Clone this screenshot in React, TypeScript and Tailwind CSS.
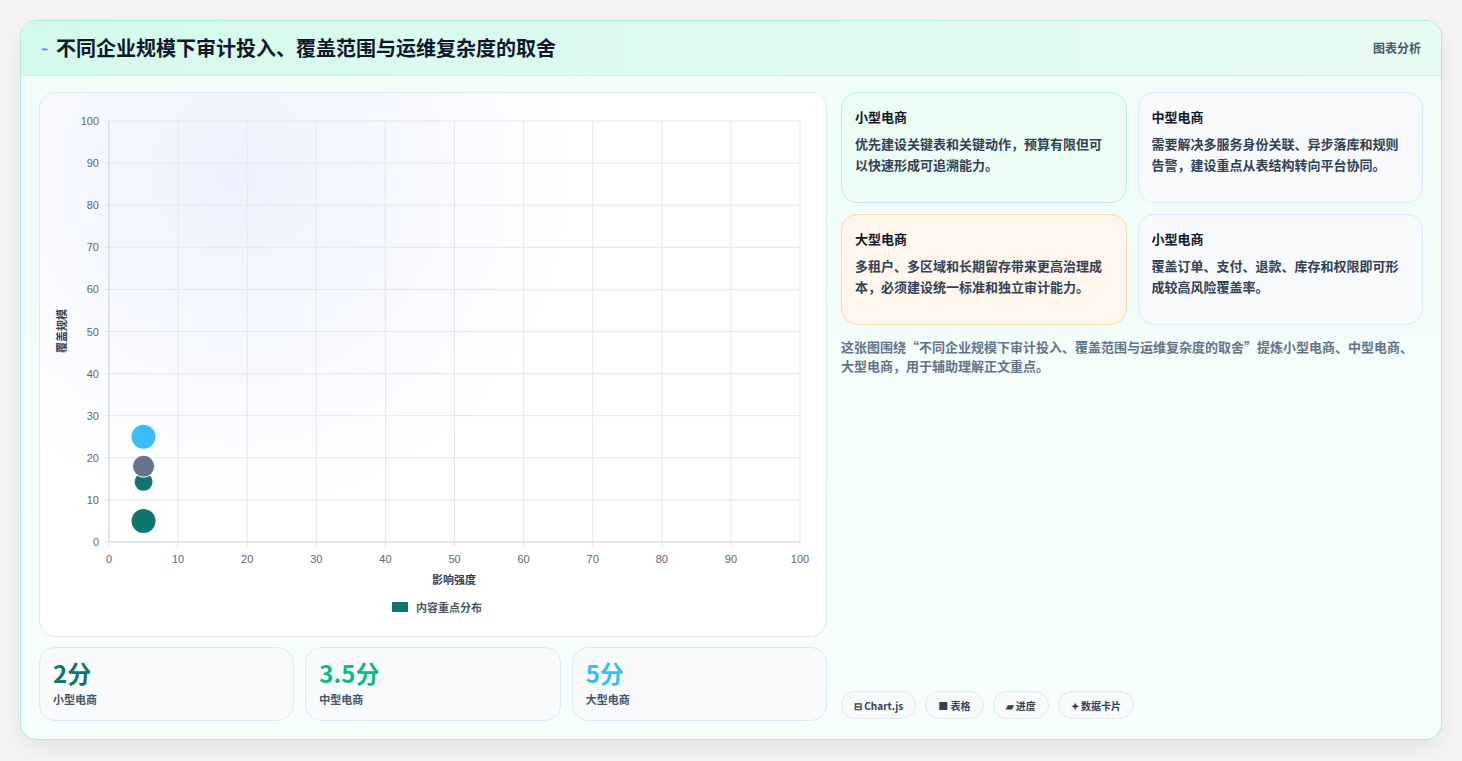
import React from "react";

const F = { fontFamily: '"Noto Sans CJK SC", "Noto Sans", sans-serif' };

function Chart() {
  const ox = 69, oy = 449, w = 691, h = 421;
  const sx = (v: number) => ox + (v / 100) * w;
  const sy = (v: number) => oy - (v / 100) * h;
  const ticks = [0, 10, 20, 30, 40, 50, 60, 70, 80, 90, 100];
  return (
    <svg width="787" height="500" viewBox="0 0 787 500" className="block">
      {ticks.map((t) => (
        <g key={t}>
          <line x1={sx(t)} x2={sx(t)} y1={sy(100)} y2={oy + 5} stroke="#e5e7eb" />
          <line x1={ox - 5} x2={sx(100)} y1={sy(t)} y2={sy(t)} stroke="#e5e7eb" />
          <text x={sx(t)} y={oy + 21} fontSize="11" fill="#666" textAnchor="middle" fontFamily="Liberation Sans, sans-serif">{t}</text>
          <text x={ox - 10} y={sy(t) + 4} fontSize="11" fill="#666" textAnchor="end" fontFamily="Liberation Sans, sans-serif">{t}</text>
        </g>
      ))}
      <line x1={ox} x2={ox} y1={sy(100)} y2={oy} stroke="#d1d5db" />
      <line x1={ox} x2={sx(100)} y1={oy} y2={oy} stroke="#d1d5db" />
      <circle cx={sx(5)} cy={sy(25)} r="12" fill="#38bdf8" />
      <circle cx={sx(5)} cy={sy(14.3)} r="9" fill="#0f766e" />
      <circle cx={sx(5)} cy={sy(18)} r="11" fill="#64748b" stroke="#fff" strokeWidth="1" />
      <circle cx={sx(5)} cy={sy(5)} r="12" fill="#0f766e" />
      <text x={414} y={491} fontSize="11" fontWeight="700" fill="#374151" textAnchor="middle" style={F}>影响强度</text>
      <text transform="translate(26 238) rotate(-90)" fontSize="11" fontWeight="700" fill="#374151" textAnchor="middle" style={F}>覆盖规模</text>
    </svg>
  );
}

const cards = [
  { t: "小型电商", d: "优先建设关键表和关键动作，预算有限但可以快速形成可追溯能力。", c: "bg-[#ecfdf5] border-[#bbf0d9]" },
  { t: "中型电商", d: "需要解决多服务身份关联、异步落库和规则告警，建设重点从表结构转向平台协同。", c: "bg-[#f8fafc] border-[#dbeafe]" },
  { t: "大型电商", d: "多租户、多区域和长期留存带来更高治理成本，必须建设统一标准和独立审计能力。", c: "bg-[#fff7ed] border-[#fcd9a8]" },
  { t: "小型电商", d: "覆盖订单、支付、退款、库存和权限即可形成较高风险覆盖率。", c: "bg-[#f8fafc] border-[#dbeafe]" },
];

export default function App() {
  return (
    <div className="w-[1462px] h-[761px] bg-[#f5f5f5] p-5 pb-0" style={F}>
      <div className="h-[720px] rounded-2xl border border-[#a7eee0] bg-gradient-to-b from-[#f0fdf8] to-[#f7fffd] shadow-[0_8px_24px_rgba(0,0,0,0.08)] overflow-hidden flex flex-col">
        <div className="h-[55px] shrink-0 flex items-center justify-between px-5 bg-gradient-to-r from-[#d4faec] to-[#e8fcf3] border-b border-[#c9f3e6]">
          <div className="flex items-center gap-2">
            <span className="text-[#3b82f6] text-[12px]">⌁</span>
            <span className="text-[20px] font-bold text-[#0f172a]">不同企业规模下审计投入、覆盖范围与运维复杂度的取舍</span>
          </div>
          <span className="text-[12px] font-semibold text-[#475569]">图表分析</span>
        </div>
        <div className="flex gap-[14px] px-[18px] pt-4">
          <div className="w-[788px] shrink-0 flex flex-col gap-[10px]">
            <div className="h-[545px] rounded-2xl border border-[#e2e8f0] bg-[radial-gradient(circle_at_25%_15%,#eef2ff,#ffffff_45%)]">
              <Chart />
              <div className="flex items-center justify-center gap-2 mt-[6px] ml-[8px]">
                <span className="w-4 h-[10px] bg-[#0f766e]" />
                <span className="text-[11px] font-bold text-[#4b5563]">内容重点分布</span>
              </div>
            </div>
            <div className="grid grid-cols-3 gap-[11px]">
              {[["2分", "text-[#0f766e]"], ["3.5分", "text-[#10b981]"], ["5分", "text-[#38bdf8]"]].map(([v, c], i) => (
                <div key={i} className="h-[74px] rounded-2xl border border-[#dbeafe] bg-[#f8fafc] px-[13px] pt-[10px]">
                  <div className={`text-[24px] font-bold leading-[30px] ${c}`}>{v}</div>
                  <div className="text-[11px] font-semibold text-[#475569] mt-[3px]">{["小型电商", "中型电商", "大型电商"][i]}</div>
                </div>
              ))}
            </div>
          </div>
          <div className="flex-1 flex flex-col">
            <div className="grid grid-cols-2 gap-[11px]">
              {cards.map((c, i) => (
                <div key={i} className={`h-[111px] rounded-2xl border px-[13px] pt-[14px] ${c.c}`}>
                  <div className="text-[13px] font-bold text-[#0f172a]">{c.t}</div>
                  <div className="text-[13px] font-semibold leading-[21px] text-[#334155] mt-[6px] pr-[4px]">{c.d}</div>
                </div>
              ))}
            </div>
            <p className="text-[13px] font-semibold leading-[19px] text-[#64748b] mt-[12px]">这张图围绕“不同企业规模下审计投入、覆盖范围与运维复杂度的取舍”提炼小型电商、中型电商、大型电商，用于辅助理解正文重点。</p>
            <div className="flex gap-[9px]" style={{ marginTop: 316 }}>
              {["⊟ Chart.js", "■ 表格", "▰ 进度", "✦ 数据卡片"].map((b) => (
                <span key={b} className="h-[28px] px-3 flex items-center rounded-full border border-[#e2e8f0] bg-[#f8fafc] text-[10px] font-bold text-[#334155]">{b}</span>
              ))}
            </div>
          </div>
        </div>
      </div>
    </div>
  );
}
